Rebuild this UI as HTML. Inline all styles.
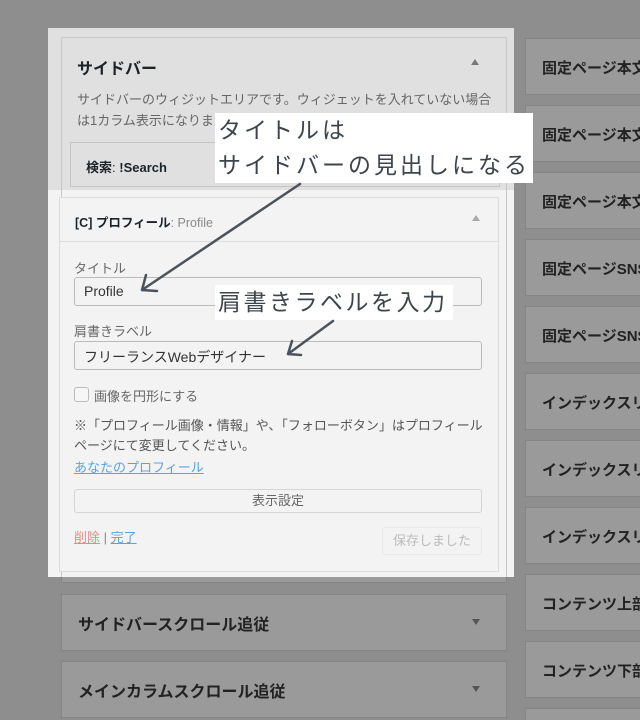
<!DOCTYPE html>
<html style="width:640px;height:720px;overflow:hidden"><head><meta charset="utf-8"><style>
*{margin:0;padding:0;box-sizing:border-box}
body{width:640px;height:720px;overflow:hidden;background:#8e8e8e;position:relative;font-family:"Liberation Sans","Noto Sans CJK JP",sans-serif;color:#1d2327}
.a{position:absolute}
.rb{position:absolute;left:525px;width:115px;height:57px;background:#9a9a9a;border:1px solid #858585;border-right:none;font-weight:bold;font-size:15px;color:#222;padding:18px 0 0 16px;white-space:nowrap;overflow:hidden}
.lb{position:absolute;left:61px;width:446px;height:57px;background:#9a9a9a;border:1px solid #858585;font-weight:bold;font-size:16px;color:#222;padding:16px 0 0 16px}
.lb i{position:absolute;right:26px;top:24px;width:0;height:0;border-left:4px solid transparent;border-right:4px solid transparent;border-top:6px solid #555}
.inp{position:absolute;left:74px;width:408px;height:29px;border:1px solid #bbb;border-radius:3px;background:#f3f3f3;font-size:14px;color:#333;padding:5px 0 0 9px}
.note{background:#fff;color:#3c444c;font-size:23px;letter-spacing:3px;line-height:35px;padding:0 3px}
</style></head><body>
<div class="rb" style="top:38px">固定ページ本文上</div>
<div class="rb" style="top:105px">固定ページ本文中</div>
<div class="rb" style="top:172px">固定ページ本文下</div>
<div class="rb" style="top:239px">固定ページSNS</div>
<div class="rb" style="top:306px">固定ページSNS</div>
<div class="rb" style="top:373px">インデックスリスト</div>
<div class="rb" style="top:440px">インデックスリスト</div>
<div class="rb" style="top:507px">インデックスリスト</div>
<div class="rb" style="top:574px">コンテンツ上部</div>
<div class="rb" style="top:641px">コンテンツ下部</div>
<div class="rb" style="top:708px;height:12px;border-bottom:none"></div>
<div class="a" style="left:61px;top:560px;width:446px;height:23px;background:#9a9a9a;border:1px solid #858585;border-top:none"></div>
<div class="lb" style="top:594px">サイドバースクロール追従<i></i></div>
<div class="lb" style="top:661px">メインカラムスクロール追従<i></i></div>

<div class="a" style="left:48px;top:28px;width:466px;height:549px;background:#f3f3f3"></div>
<div class="a" style="left:48px;top:28px;width:466px;height:162px;background:#e0e0e0"></div>
<div class="a" style="left:61px;top:37px;width:446px;height:540px;border:1px solid #c8c8c8;border-bottom:none"></div>
<div class="a" style="left:77px;top:55px;font-size:16px;font-weight:bold">サイドバー</div>
<div class="a" style="left:471px;top:59px;border-left:4px solid transparent;border-right:4px solid transparent;border-bottom:6px solid #777"></div>
<div class="a" style="left:77px;top:89px;width:420px;font-size:13px;color:#666;line-height:21px">サイドバーのウィジットエリアです。ウィジェットを入れていない場合は1カラム表示になります。</div>
<div class="a" style="left:70px;top:142px;width:430px;height:45px;border:1px solid #c5c5c5;font-size:13px;font-weight:bold;padding:14px 0 0 15px">検索<span style="font-weight:normal">: </span>!Search</div>

<div class="a" style="left:59px;top:197px;width:440px;height:375px;border:1px solid #dcdcdc;background:#f3f3f3"></div>
<div class="a" style="left:59px;top:241px;width:440px;height:1px;background:#dcdcdc"></div>
<div class="a" style="left:75px;top:212px;font-size:12.5px;font-weight:bold">[C] プロフィール<span style="font-weight:normal;color:#888">: Profile</span></div>
<div class="a" style="left:472px;top:215px;border-left:4px solid transparent;border-right:4px solid transparent;border-bottom:6px solid #aaa"></div>
<div class="a" style="left:74px;top:258px;font-size:13px;color:#666">タイトル</div>
<div class="inp" style="top:277px">Profile</div>
<div class="a" style="left:74px;top:321px;font-size:13px;color:#666">肩書きラベル</div>
<div class="inp" style="top:341px">フリーランスWebデザイナー</div>
<div class="a" style="left:74px;top:387px;width:15px;height:15px;border:1px solid #bbb;border-radius:3px;background:#f6f6f6"></div>
<div class="a" style="left:94px;top:386px;font-size:13px;color:#666">画像を円形にする</div>
<div class="a" style="left:74px;top:416px;width:410px;font-size:13px;color:#555;line-height:20px">※「プロフィール画像・情報」や、「フォローボタン」はプロフィールページにて変更してください。</div>
<div class="a" style="left:74px;top:457px;font-size:13px;color:#5ba3e0;text-decoration:underline">あなたのプロフィール</div>
<div class="a" style="left:74px;top:489px;width:408px;height:24px;border:1px solid #d5d5d5;border-radius:3px;font-size:13px;color:#666;text-align:center;line-height:22px">表示設定</div>
<div class="a" style="left:74px;top:527px;font-size:13px;color:#888"><span style="color:#e88;text-decoration:underline">削除</span> | <span style="color:#5ba3e0;text-decoration:underline">完了</span></div>
<div class="a" style="left:382px;top:527px;width:100px;height:28px;border:1px solid #e8e8e8;border-radius:3px;font-size:13px;color:#bbb;text-align:center;line-height:26px">保存しました</div>

<div class="a note" style="left:215px;top:113px;width:318px;height:70px">タイトルは<br>サイドバーの見出しになる</div>
<div class="a note" style="left:215px;top:285px;width:238px;height:35px;letter-spacing:2.5px">肩書きラベルを入力</div>
<svg class="a" style="left:0;top:0" width="640" height="720">
<g stroke="#4a545c" stroke-width="2.5" fill="none" stroke-linecap="round">
<path d="M300 184 L142 290 M142 290 L146 275 M142 290 L157 291"/>
<path d="M333 321 L288 354 M288 354 L292 341 M288 354 L301 355"/>
</g></svg>
</body></html>
